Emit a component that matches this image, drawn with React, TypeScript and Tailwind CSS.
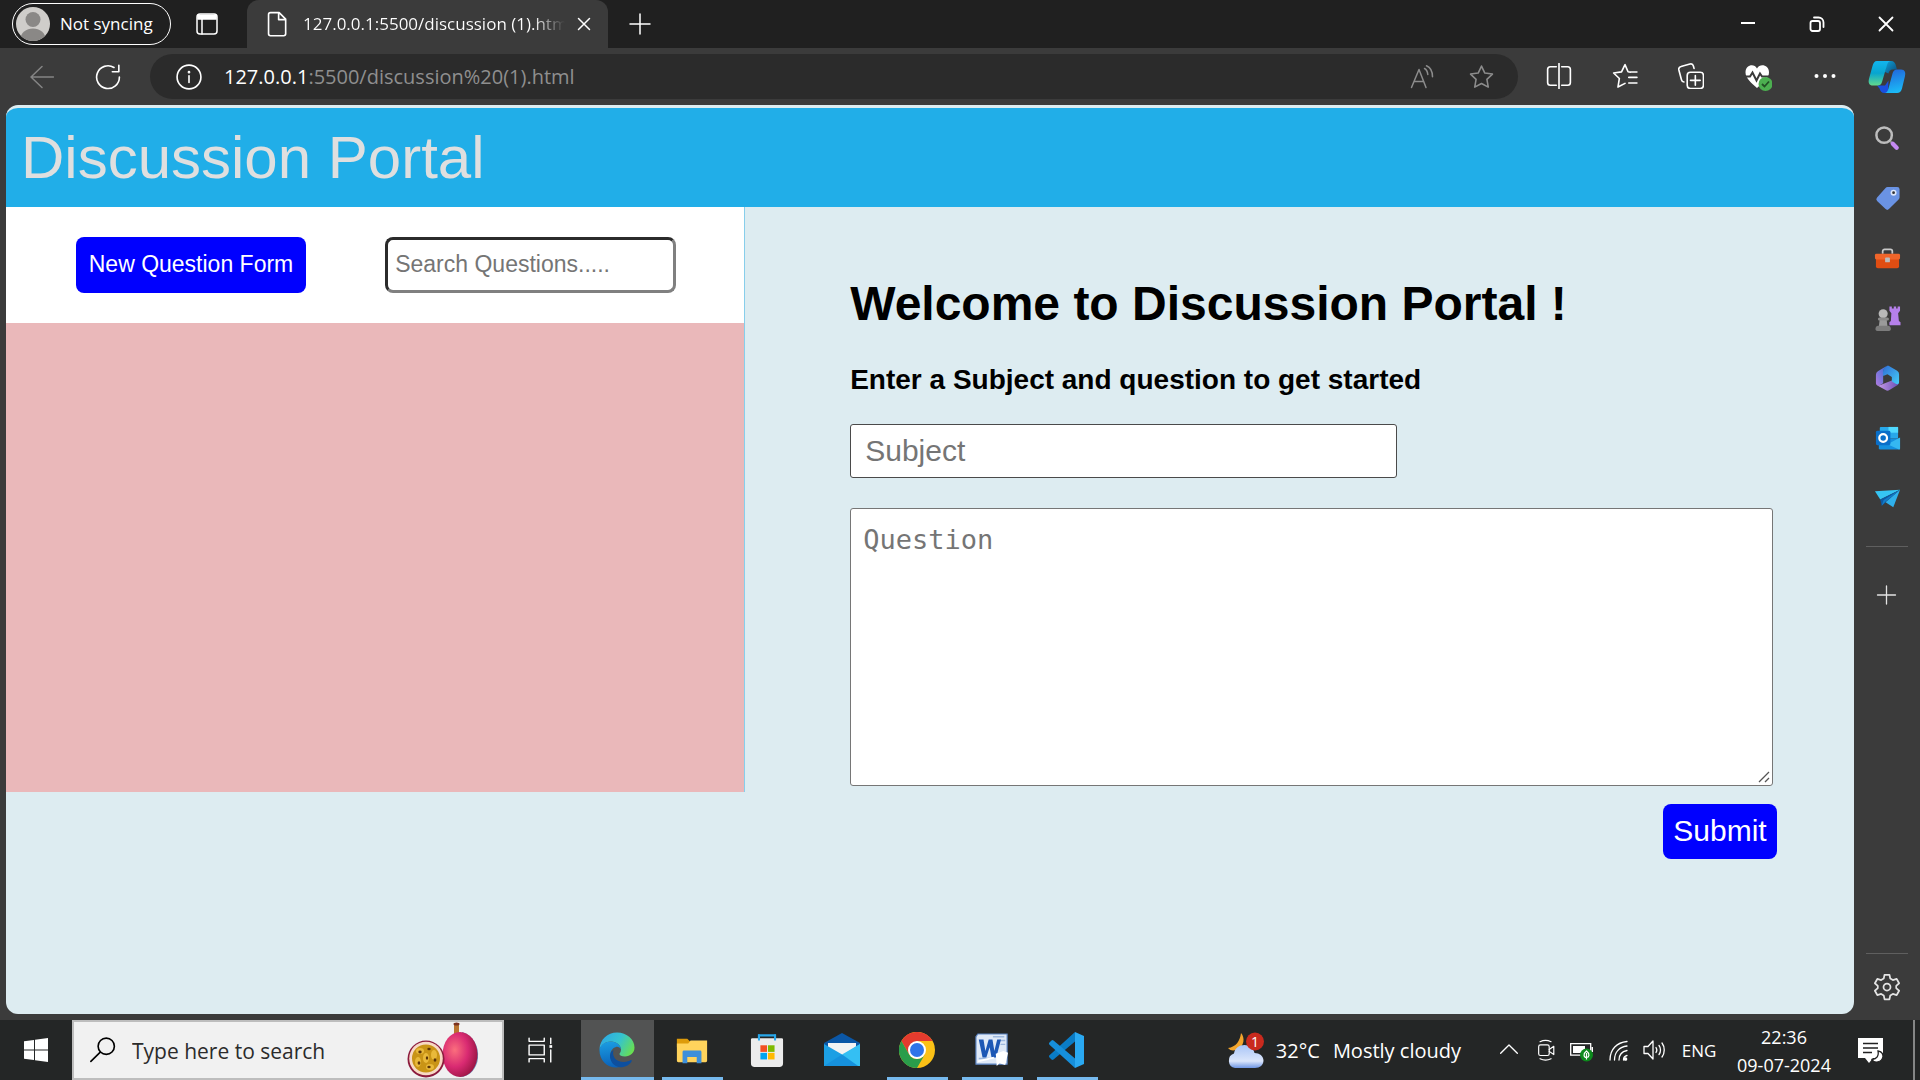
import React from "react";

type IconProps = { children: React.ReactNode; label?: string; className?: string; box?: string; sw?: number };

/* Line icon base used across the browser chrome and the taskbar */
function Line({ children, className = "size-6", box = "0 0 24 24", sw = 1.5 }: IconProps) {
  return (
    <svg viewBox={box} className={className} fill="none" stroke="currentColor" strokeWidth={sw} strokeLinecap="round" strokeLinejoin="round" aria-hidden="true">
      {children}
    </svg>
  );
}

function Pic({ children, className = "size-7", box = "0 0 28 28" }: IconProps) {
  return (
    <svg viewBox={box} className={className} aria-hidden="true">
      {children}
    </svg>
  );
}

function IconButton({ label, className = "", children }: { label: string; className?: string; children: React.ReactNode }) {
  return (
    <button type="button" aria-label={label} className={`flex shrink-0 items-center justify-center ${className}`}>
      {children}
    </button>
  );
}

function TitleBar() {
  return (
    <div className="flex h-12 shrink-0 items-center bg-[#202020] text-white">
      <button type="button" className="ml-3 flex h-[42px] w-[159px] items-center rounded-full border border-white pl-[3px] text-[17px]">
        <svg viewBox="0 0 34 34" className="size-[34px] shrink-0" aria-hidden="true">
          <defs>
            <clipPath id="avatar"><circle cx="17" cy="17" r="17" /></clipPath>
          </defs>
          <g clipPath="url(#avatar)">
            <rect width="34" height="34" fill="#cfcdca" />
            <circle cx="17" cy="12.5" r="7.5" fill="#8a8886" />
            <ellipse cx="17" cy="32" rx="12.5" ry="10.5" fill="#8a8886" />
          </g>
        </svg>
        <span className="ml-[10px] whitespace-nowrap">Not syncing</span>
      </button>
      <IconButton label="Tab actions" className="mx-[24px] size-[24px]">
        <Line>
          <rect x="2" y="2" width="20" height="20" rx="3" />
          <path d="M3 3.2h18V7H3z" fill="currentColor" />
          <path d="M7 7v15" />
        </Line>
      </IconButton>
      <div className="ml-1 flex h-12 w-[361px] items-center rounded-t-xl bg-[#3b3b3b]">
        <Line className="ml-[17px] size-[26px] shrink-0">
          <path d="M6 1.5h8l6 6V21a1.8 1.8 0 0 1-1.800 1.800H6A1.800 1.800 0 0 1 4.200 21V3.300A1.800 1.800 0 0 1 6 1.500zM13.500 1.500V8H20" />
        </Line>
        <span className="ml-[13px] w-[262px] overflow-hidden whitespace-nowrap bg-linear-to-r from-white from-88% to-[#3b3b3b] bg-clip-text text-[17px] text-transparent">127.0.0.1:5500/discussion (1).html</span>
        <IconButton label="Close tab" className="ml-[7px] size-6">
          <Line className="size-[24px]"><path d="M6.500 6.500l11 11M17.500 6.500l-11 11" /></Line>
        </IconButton>
      </div>
      <IconButton label="New tab" className="ml-[20px] size-6">
        <Line><path d="M12 2v20M2 12h20" /></Line>
      </IconButton>
      <div className="ml-auto flex">
        <IconButton label="Minimize" className="h-12 w-[69px]"><Line sw={2}><path d="M5 11h14" strokeLinecap="butt" /></Line></IconButton>
        <IconButton label="Restore" className="h-12 w-[69px]">
          <Line sw={1.800}><rect x="5.500" y="9" width="9.500" height="10" rx="2" /><path d="M9 5.500h4.500a5 5 0 0 1 5 5V15" /></Line>
        </IconButton>
        <IconButton label="Close" className="h-12 w-[69px]"><Line sw={1.800}><path d="M5.500 5.500l13 13M18.500 5.500l-13 13" /></Line></IconButton>
      </div>
    </div>
  );
}

const STAR = "M12 1.500l3.200 6.700 7.300 1-5.300 5.100 1.300 7.400L12 18.200l-6.500 3.500 1.300-7.400L1.500 9.200l7.300-1z";

function Copilot() {
  return (
    <Pic className="h-[34px] w-[38px]" box="0 0 38 34">
      <defs>
        <linearGradient id="cpA" x1="0" y1="0" x2="0" y2="1"><stop offset="0" stopColor="#12b5ee" /><stop offset=".5" stopColor="#08a5cf" /><stop offset="1" stopColor="#62d98c" /></linearGradient>
        <linearGradient id="cpB" x1=".4" y1="0" x2=".6" y2="1"><stop offset="0" stopColor="#2168dc" /><stop offset="1" stopColor="#1bbdf8" /></linearGradient>
        <linearGradient id="cpC" x1="0" y1="0" x2="1" y2="1"><stop offset="0" stopColor="#0ea2d8" /><stop offset="1" stopColor="#0b4a7c" /></linearGradient>
      </defs>
      <path d="M18 1h5c3 0 4.500 2 5 5l1 3.500h-4c-3 0-4 2-4.500 4L17 12z" fill="url(#cpC)" />
      <path d="M9 25.500h8l3.500-5L20 33h-3.500c-3 0-4.200-2-5-4.500z" fill="#1a4fe0" />
      <path d="M9 1h14c-2 0-3.300 1.500-4 4l-5 17c-.8 2.600-2.300 3.500-4.500 3.500H5c-4 0-5-3-4-6.800L4.500 6C5.300 3 6.500 1 9 1z" fill="url(#cpA)" />
      <path d="M29 9.500h4c4 0 4.800 3 4 6.500L34 28.500c-.8 3-2.500 4.500-5 4.500H16.500c2 0 3-1.500 3.800-4l4.200-15.500c.8-2.800 2.200-4 4.500-4z" fill="url(#cpB)" />
    </Pic>
  );
}

function Toolbar() {
  return (
    <div className="flex h-[57px] shrink-0 items-center bg-[#3b3b3b] text-white">
      <IconButton label="Back" className="ml-[30px] size-6 text-[#858585]"><Line className="size-6"><path d="M23.500 12H1M12 1.500L1 12l11 10.500" /></Line></IconButton>
      <IconButton label="Refresh" className="ml-[41px] size-[26px]">
        <Line className="size-[26px]"><path d="M22.500 12A10.500 10.500 0 1 1 17.500 3.200M22 1.200v6h-6" /></Line>
      </IconButton>
      <div className="ml-[29px] flex h-[45px] flex-1 items-center rounded-full bg-[#2b2b2b] pl-[26px]">
        <IconButton label="View site information" className="size-[26px]">
          <Line className="size-[26px]"><circle cx="12" cy="12" r="11" /><path d="M12 10.800v6.200" /><circle cx="12" cy="7.500" r=".5" fill="currentColor" /></Line>
        </IconButton>
        <span className="ml-[22px] text-[20px] text-[#8f8f8f]"><span className="text-white">127.0.0.1</span>:5500/discussion%20(1).html</span>
        <IconButton label="Read aloud" className="ml-auto size-6 text-[#8c8c8c]">
          <Line className="size-6"><path d="M1.500 22.500L9 4.500l7 18M4.300 16.500h9.500M14.500 3.500c2 1 3 3 3.300 6M16.500 .8c4 1.700 6 5.500 6 11" /></Line>
        </IconButton>
        <IconButton label="Add to favorites" className="mr-[24px] ml-[35px] size-[25px] text-[#8c8c8c]"><Line className="size-[26px]"><path d={STAR} /></Line></IconButton>
      </div>
      <div className="ml-[28px] flex gap-[40px]">
        <IconButton label="Split screen" className="size-[26px]">
          <Line className="size-[26px]"><path d="M9.500 3.500H4A2.500 2.500 0 0 0 1.500 6v12A2.500 2.500 0 0 0 4 20.500h5.500M14.500 3.500H20A2.500 2.500 0 0 1 22.500 6v12a2.500 2.500 0 0 1-2.500 2.500h-5.500M12 .5v23" /></Line>
        </IconButton>
        <IconButton label="Favorites" className="size-[26px]">
          <Line className="size-[26px]"><path d="M17 8.500l-2.200-.4L12 1.500 8.800 8.200l-7.300 1 5.300 5.100-1.300 7.900 6.500-3.400M15.500 8.300h7.500M15.500 13.300H23M15.500 18.500H23" /></Line>
        </IconButton>
        <IconButton label="Collections" className="size-[26px]">
          <Line className="size-[26px]"><rect x="8.500" y="8.500" width="15" height="15" rx="3" /><path d="M16 11.500v9M11.500 16h9M5.500 17.500c-1.300 0-2-.8-2.300-2L.8 6.500C.4 4.800 1.200 3.700 2.800 3.300L11 .9c1.600-.4 2.800.3 3.200 1.800l.6 2.300" /></Line>
        </IconButton>
        <IconButton label="Browser essentials" className="size-[28px]">
          <Pic className="size-[28px]">
            <path d="M13 25C8 20.500 1.500 15.500 1.500 9.500 1.500 2 10 0 13 5.500 16 0 25 2 25 9.500c0 6-7 11-12 15.500z" fill="#fff" />
            <path d="M-1 13.500h7l2.500-4 4 8 3.500-7 2 3H28" fill="none" stroke="#3b3b3b" strokeWidth="2" />
            <circle cx="21.500" cy="21" r="7" fill="#4caf50" /><path d="M18 21l2.500 2.500 4.500-5" fill="none" stroke="#224f25" strokeWidth="1.800" />
          </Pic>
        </IconButton>
        <IconButton label="Settings and more" className="size-[26px]">
          <Pic className="size-[24px]" box="0 0 24 24"><g fill="#fff"><circle cx="3.500" cy="12" r="2" /><circle cx="12" cy="12" r="2" /><circle cx="20.500" cy="12" r="2" /></g></Pic>
        </IconButton>
      </div>
      <IconButton label="Copilot" className="mr-[14px] ml-[30px] w-[38px]"><Copilot /></IconButton>
    </div>
  );
}

const sideApps = [
  {
    name: "Search",
    icon: <><path d="M16.500 16.500l3 3" stroke="#888" strokeWidth="2.500" /><circle cx="10.500" cy="10.500" r="8" fill="none" stroke="#bdbdbd" strokeWidth="2.600" /><path d="M19.500 19.500l4 4" stroke="#c58af2" strokeWidth="4.500" strokeLinecap="round" /></>,
  },
  {
    name: "Shopping",
    icon: <><path d="M14 2h10a2.500 2.500 0 0 1 2.500 2.500V13a3 3 0 0 1-1 2L15.500 25a2.500 2.500 0 0 1-3.500 0l-8.800-8.500a2.500 2.500 0 0 1 0-3.500L12 3a3 3 0 0 1 2-1z" fill="#6a93e4" /><circle cx="20.300" cy="8" r="2.300" fill="#333" stroke="#dce6fb" strokeWidth="1.700" /></>,
  },
  {
    name: "Tools",
    icon: <><path d="M9 9V6.500A2 2 0 0 1 11 4.500h6a2 2 0 0 1 2 2V9" fill="none" stroke="#c9c9c9" strokeWidth="1.800" /><rect x="2" y="13" width="24" height="11" rx="2" fill="#e04d12" /><rect x="1" y="9" width="26" height="6" rx="1.500" fill="#f0652a" /><rect x="11.500" y="13" width="5" height="5" rx="1" fill="#bcbcbc" /></>,
  },
  {
    name: "Games",
    icon: <><path d="M16 1.500h2.500v2h2v-2h2.500v2h1.500v-2H27V6l-2 2.500.8 8L27.500 18v3H16v-3l1.500-1.500.5-8L16 6z" fill="#b580ea" /><path d="M6 14h7l1 8H5z" fill="#9a9a9a" /><circle cx="9.500" cy="9" r="4.700" fill="#b9b9b9" /><rect x="4" y="13" width="11.500" height="3.200" rx="1.600" fill="#8b8b8b" /><path d="M1.500 25c0-3 2-3.500 4-3.500h8c2 0 4 .5 4 3.500 0 1-.5 2-2 2h-12c-1.500 0-2-1-2-2z" fill="#7c7c7c" /></>,
  },
  {
    name: "Microsoft 365",
    icon: <>
      <defs>
        <linearGradient id="mA" x1="0" y1="1" x2="1" y2="0"><stop offset="0" stopColor="#b07be0" /><stop offset="1" stopColor="#3a6fd8" /></linearGradient>
        <linearGradient id="mB" x1="0" y1="0" x2="1" y2="1"><stop offset="0" stopColor="#2f6fd6" /><stop offset="1" stopColor="#46cdf7" /></linearGradient>
        <linearGradient id="mC" x1="0" y1="0" x2="1" y2="0"><stop offset="0" stopColor="#c79be8" /><stop offset="1" stopColor="#6a4fb5" /></linearGradient>
      </defs>
      <path d="M13 1L4 6.500A4 4 0 0 0 2 10v9a2.500 2.500 0 0 0 4 2l3.500-2V11c0-4 0-7.500 3.500-10z" fill="url(#mA)" />
      <path d="M6 21l12.500-5 7 2.500-.5 2-9 5.500a4 4 0 0 1-4 0L4 21.500z" fill="url(#mC)" />
      <path d="M13 1.200c1-.5 2-.4 3 .1L24 6a4 4 0 0 1 2 3.500V18c0 2-2 2.500-3.500 1.500L18.500 17v-4.500l-4.500-3-4.500 2C9 6 9.500 3 13 1.200z" fill="url(#mB)" />
    </>,
  },
  {
    name: "Outlook",
    icon: <><rect x="6" y="2" width="19" height="12" rx="1" fill="#28a8ea" /><rect x="15" y="2" width="10" height="6" fill="#50d9ff" /><path d="M5 14h22v10a1.500 1.500 0 0 1-1.500 1.500H6.500A1.500 1.500 0 0 1 5 24z" fill="#1490df" /><path d="M27 13L14 20l12 5.500c1-.3 1-1 1-1.500z" fill="#35b8f1" /><rect x="2" y="6" width="15" height="15" rx="1.500" fill="#0a6fc9" /><circle cx="9.500" cy="13.500" r="4" fill="none" stroke="#fff" strokeWidth="2.300" /></>,
  },
  {
    name: "Drop",
    icon: <><path d="M1 6.500L27 5 6.500 15z" fill="#36c5f4" /><path d="M6.500 15L27 5 8 21.500z" fill="#0c59a4" /><path d="M27 5L20 23l-8-5z" fill="#2fb0ec" /><path d="M8 21.500l4-4.500 15-12-17 10.500z" fill="#127cc9" /></>,
  },
];

function Sidebar() {
  return (
    <nav aria-label="Sidebar" className="flex w-[66px] shrink-0 flex-col items-center bg-[#3b3b3b] pt-[3px] text-[#e4e4e4]">
      {sideApps.map((a) => (
        <IconButton key={a.name} label={a.name} className="h-[60px] w-full"><Pic className="size-[27px]">{a.icon}</Pic></IconButton>
      ))}
      <div className="mt-[18px] h-px w-[42px] bg-[#5f5f5f]" />
      <IconButton label="Customize" className="mt-[18px] h-[60px] w-full"><Line className="size-6" sw={1.300}><path d="M11.500 3v18M2.500 12h18" /></Line></IconButton>
      <div className="mt-auto h-px w-[42px] bg-[#5f5f5f]" />
      <IconButton label="Settings" className="h-[66px] w-full">
        <Line className="size-[28px]">
          <circle cx="12" cy="12" r="3" />
          <path d="M9.900 1.500h4.200l.7 3.300 2.200 1.300 3.300-1 2.100 3.700L19.900 11v2l2.500 2.200-2.100 3.700-3.300-1-2.200 1.300-.7 3.300H9.900l-.7-3.300L7 17.900l-3.300 1-2.100-3.700L4.100 13v-2L1.600 8.800l2.100-3.700 3.300 1 2.200-1.300z" />
        </Line>
      </IconButton>
    </nav>
  );
}

function Portal() {
  return (
    <main className="mb-[6px] ml-[6px] flex min-w-0 flex-1 flex-col overflow-hidden rounded-xl border-t-3 border-[#ddecf1] bg-[#ddecf1] font-['Liberation_Sans',Arial,sans-serif]">
      <header className="flex h-[99px] shrink-0 items-center bg-[#21aee8] px-[15px] text-[60px] leading-[72px] text-[#dfdfdf]">Discussion Portal</header>
      <div className="flex flex-1 items-start">
        <section className="w-2/5 border-r border-[#87ceeb]">
          <div className="flex h-[116px] items-center justify-between bg-white pr-[68px] pl-[70px] text-[23px]">
            <button type="button" className="h-14 w-[230px] rounded-lg bg-[#0000ff] pb-[2px] whitespace-nowrap text-white">New Question Form</button>
            <input type="search" aria-label="Search Questions" placeholder="Search Questions....." className="h-14 w-[291px] rounded-lg border-3 border-t-[#2b2b2b] border-r-[#808080] border-b-[#808080] border-l-[#2b2b2b] bg-white px-[7px] pb-[2px] placeholder:text-[#757575]" />
          </div>
          <div className="h-[469px] bg-[#eab8ba]" />
        </section>
        <form className="flex flex-1 flex-col pt-[69px] pr-[77px] pl-[105px]" onSubmit={(e) => e.preventDefault()}>
          <h1 className="text-[48px] leading-[56px] font-bold text-black">Welcome to Discussion Portal !</h1>
          <h2 className="mt-8 text-[28px] leading-[32px] font-bold text-black">Enter a Subject and question to get started</h2>
          <input type="text" aria-label="Subject" placeholder="Subject" className="mt-7 h-[54px] w-[59%] rounded-[3px] border border-[#4a4a4a] bg-white px-[14px] text-[30px] placeholder:text-[#757575]" />
          <div className="relative mt-[30px] mr-1 flex">
            <textarea aria-label="Question" placeholder="Question" className="h-[278px] w-full resize-none rounded-[3px] border border-[#767676] bg-white px-3 py-[14px] font-['DejaVu_Sans_Mono',monospace] text-[27px] leading-[34px] placeholder:text-[#757575]" />
            <svg viewBox="0 0 12 12" className="pointer-events-none absolute right-[3px] bottom-[3px] size-3" fill="none" stroke="#555" strokeWidth="1.300" aria-hidden="true">
              <path d="M1 11L11 1M7 11l4-4" />
            </svg>
          </div>
          <button type="submit" className="mt-[18px] h-[55px] w-[114px] self-end rounded-lg bg-[#0000ff] pb-[2px] text-[30px] text-white">Submit</button>
        </form>
      </div>
    </main>
  );
}

function Fruit() {
  return (
    <Pic className="h-[56px] w-[74px]" box="0 0 74 56">
      <defs>
        <radialGradient id="fr" cx=".35" cy=".4" r=".75"><stop offset="0" stopColor="#fb6f7d" /><stop offset=".5" stopColor="#d92a72" /><stop offset="1" stopColor="#8d1039" /></radialGradient>
      </defs>
      <rect x="47" y="1" width="5" height="12" fill="#b9742f" /><ellipse cx="49.500" cy="2" rx="3" ry="1.500" fill="#7c3320" />
      <path d="M55 10c11 3 17 14 16 26-1 11-9 19-18 19z" fill="#6a8db8" />
      <ellipse cx="53" cy="32.500" rx="17.500" ry="22.500" fill="url(#fr)" />
      <circle cx="19" cy="37" r="18.500" fill="#8c1b3d" /><circle cx="19" cy="36.500" r="16.800" fill="#f7d9c4" /><circle cx="19" cy="36.500" r="14" fill="#c99416" />
      <g fill="#e9b93a"><ellipse cx="13" cy="29" rx="4" ry="3" /><ellipse cx="19" cy="36" rx="3" ry="5" /><ellipse cx="27" cy="33" rx="3" ry="5" /><ellipse cx="11" cy="40" rx="3" ry="5" /><ellipse cx="23" cy="45" rx="4" ry="3" /></g>
      <g fill="#5b3408"><ellipse cx="13" cy="30" rx="1.700" ry="1.400" /><ellipse cx="22" cy="27" rx="1.700" ry="1.200" /><ellipse cx="20" cy="36" rx="1.200" ry="1.700" /><ellipse cx="28" cy="38" rx="1.400" ry="1.700" /><ellipse cx="12" cy="41" rx="1.400" ry="1.700" /><ellipse cx="22" cy="45" rx="1.700" ry="1.300" /></g>
    </Pic>
  );
}

const apps = [
  {
    name: "Microsoft Edge", active: true, open: true,
    icon: <>
      <defs>
        <linearGradient id="edA" x1="0" y1=".3" x2="1" y2=".7"><stop offset="0" stopColor="#2da9e4" /><stop offset=".5" stopColor="#35c3cf" /><stop offset="1" stopColor="#6be04c" /></linearGradient>
        <linearGradient id="edB" x1=".3" y1="0" x2=".4" y2="1"><stop offset="0" stopColor="#1b9de2" /><stop offset="1" stopColor="#0b62b9" /></linearGradient>
      </defs>
      <path d="M.5 17C1 7.500 8.500.5 18 .5c10 0 17.500 7 17.500 15 0 5.500-4.500 9-9.500 9-3.500 0-5.500-1-5.500-2.500 0-1 1.500-1.700 1.500-4.500 0-4-4.500-8-10-8C6.500 9.500 2.500 13 .5 17z" fill="url(#edA)" />
      <path d="M.5 17C2 12.500 6.500 9.500 12 9.500c5.500 0 10 4 10 8-1-2-3-3-5-2.500-4 1-6 5-5.500 9.500.5 5 4 9.500 10 10.500C9.500 37.500 0 29 .5 17z" fill="url(#edB)" />
      <path d="M14.500 18c-2 7 3 12 10 12 3.500 0 6-1.500 7-1.800 1-.4 1.500.4 1 1.300C30.500 33 26 35.500 21 35.300c-6-.8-9.500-5.300-10-10.300-.2-3 1-5.800 3.500-7z" fill="#0d4f9e" />
    </>,
  },
  {
    name: "File Explorer", open: true,
    icon: <><path d="M2 6h11l3 3v6H2z" fill="#dd9b0b" /><path d="M2 11h12l2.500-3H34v21.500a1.500 1.500 0 0 1-1.500 1.500H3.500A1.500 1.500 0 0 1 2 29.500z" fill="#ffd35c" /><path d="M8 20a1.500 1.500 0 0 1 1.500-1.500h17A1.500 1.500 0 0 1 28 20v12h-5v-6.500H13V32H8z" fill="#3d8fda" /></>,
  },
  {
    name: "Microsoft Store", open: false,
    icon: <><path d="M9.500 8V2.500h17V8" fill="none" stroke="#29a8ea" strokeWidth="2.200" /><path d="M1 7a1.500 1.500 0 0 1 1.500-1.500h31A1.500 1.500 0 0 1 35 7v25a4 4 0 0 1-4 4H5a4 4 0 0 1-4-4z" fill="#ececec" /><path d="M9.500 1.500v6.500M26.500 1.500V8" stroke="#29a8ea" strokeWidth="2.200" /><path d="M11 13h7v7h-7z" fill="#f25022" /><path d="M19 13h7v7h-7z" fill="#7fba00" /><path d="M11 21h7v7h-7z" fill="#00a4ef" /><path d="M19 21h7v7h-7z" fill="#ffb900" /></>,
  },
  {
    name: "Mail", open: false,
    icon: <><path d="M0 11L18 1l18 10v4H0z" fill="#0b57a6" /><path d="M4 11h28v12H4z" fill="#f3f3f3" /><path d="M0 12l19 11L36 12v22H0z" fill="#1c9fe4" /><path d="M36 12L18 22.500 34 34h2z" fill="#34bff3" /><path d="M0 34l18-11.500L34 34z" fill="#1288d8" opacity=".6" /></>,
  },
  {
    name: "Google Chrome", open: true,
    icon: <><circle cx="18" cy="18" r="18" fill="#fbc116" /><path d="M18 9h15.600A18 18 0 0 0 2.400 9l7.800 13.500z" fill="#e33b2e" /><path d="M2.400 9A18 18 0 0 0 18 36l7.800-13.500A9 9 0 0 1 10.200 22.500z" fill="#2a9d4b" /><circle cx="18" cy="18" r="9" fill="#fff" /><circle cx="18" cy="18" r="7" fill="#2f74e8" /></>,
  },
  {
    name: "Microsoft Word", open: true,
    icon: <><path d="M3 1h31v32H1V4z" fill="#dfe9f7" stroke="#5a83c2" strokeWidth="1.200" /><path d="M19 4h12M26 8h6M27 12h5M4 27h12" stroke="#9db8de" strokeWidth="1.500" /><path d="M4 7h5l2 12 3.500-12h4l2 12 3-12h4l-5 19h-5l-2-11-3.500 11H8z" fill="#1c57b5" /><path d="M22 22l8-3 5 2-3 13-6-2-3 3z" fill="#fff" /><path d="M3 30l17-4" stroke="#fff" strokeWidth="2" /></>,
  },
  {
    name: "Visual Studio Code", open: true,
    icon: <><path d="M26 0l9 4v28l-9 4z" fill="#2aa9f2" /><path d="M26 9.500L4.500 27.500a1.500 1.500 0 0 1-2 0l-2-2a1.500 1.500 0 0 1 0-2.200L26 0z" fill="#0a7cc6" /><path d="M26 26.500L4.500 8.500a1.500 1.500 0 0 0-2 0l-2 2a1.500 1.500 0 0 0 0 2.200L26 36z" fill="#168fdb" /></>,
  },
];

function Taskbar() {
  return (
    <footer className="flex h-[60px] shrink-0 items-stretch bg-[#242626] text-white">
      <IconButton label="Start" className="w-[72px]">
        <Pic className="size-6" box="0 0 24 24"><path d="M0 3.300l10-1.400v9.600H0zM11 1.700L24 0v11.500H11zM0 12.500h10v9.600L0 20.700zM11 12.500h13V24l-13-1.700z" fill="#fff" /></Pic>
      </IconButton>
      <label className="flex w-[432px] items-center border-2 border-[#bdbdbd] bg-[#f1f1f1] pl-4">
        <Line className="size-[26px] shrink-0 text-black"><circle cx="15" cy="8.500" r="7.500" /><path d="M9.500 14L.8 22.500" /></Line>
        <input type="text" placeholder="Type here to search" aria-label="Type here to search" className="ml-4 w-[275px] bg-transparent pt-1 text-[21px] placeholder:text-[#2b2b2b]" />
        <Fruit />
      </label>
      <IconButton label="Task view" className="w-[77px] pr-1">
        <Line className="size-[26px]" sw={1.300}><path d="M1 1v3h14V1M1 23v-3h14v3M1 7.500h14v9H1zM21 1v5M21 12v11" /><path d="M19.800 7.500h2.500v2.500h-2.500z" fill="currentColor" stroke="none" /></Line>
      </IconButton>
      {apps.map((a) => (
        <button key={a.name} type="button" aria-label={a.name} className={a.active ? "mr-2 flex w-[73px] flex-col items-center bg-[#525353]" : "mr-[14px] flex w-[61px] flex-col items-center"}>
          <span className="flex flex-1 items-center pt-[2px] pr-[2px]"><Pic className={a.active || a.name === "Google Chrome" || a.name === "Mail" || a.name.startsWith("Visual") ? "size-9" : "size-[34px]"} box="0 0 36 36">{a.icon}</Pic></span>
          <span className={a.open ? "h-[3px] w-full bg-[#76b9ed]" : "h-[3px] w-full"} />
        </button>
      ))}
      <div className="ml-auto flex items-center">
        <button type="button" className="flex items-center text-[20px] whitespace-nowrap">
          <svg viewBox="0 0 37 37" className="size-[37px]" aria-hidden="true">
            <defs><linearGradient id="cl" x1="0" y1="0" x2="0" y2="1"><stop offset="0" stopColor="#a9c5f7" /><stop offset=".7" stopColor="#dbe6fb" /><stop offset="1" stopColor="#6f96e4" /></linearGradient></defs>
            <path d="M14 1c4 4 4 14-5 17-3 1-6 .5-8-2 8-1 12-7 13-15z" fill="#f2a42c" />
            <path d="M8 36a7.500 7.500 0 0 1-1-14.500C8 16 12 13 17.500 13c5 0 9 3 10 8 5 0 9 3 9 7.500S33 36 28 36z" fill="url(#cl)" />
            <circle cx="28" cy="9.500" r="9" fill="#c92a1e" /><text x="28" y="14.500" textAnchor="middle" fontSize="14" fill="#fff">1</text>
          </svg>
          <span className="ml-3 pt-[2px]">32°C</span>
          <span className="ml-[13px] pt-[2px]">Mostly cloudy</span>
        </button>
        <IconButton label="Show hidden icons" className="ml-[38px] size-5"><Line className="size-5" sw={1.600}><path d="M2 16L12 6l10 10" /></Line></IconButton>
        <IconButton label="Meet now" className="ml-[16px] size-[22px]"><Line className="size-[24px]" sw={1.300}><rect x="4" y="6.500" width="11.500" height="11.500" rx="2" /><path d="M15.500 11.500L20.500 8v9l-5-3.500M5.500 3c4-2 8-2 12 0M5.500 21.500c4 2 8 2 12 0" /></Line></IconButton>
        <IconButton label="Battery" className="ml-[12px] w-[26px]">
          <Pic className="h-6 w-[26px]" box="0 0 26 24"><path d="M1.700 5.700h20v11.500h-20z" fill="none" stroke="#fff" strokeWidth="1.300" /><path d="M4 8h12v7H4z" fill="#fff" /><path d="M22.500 9h1.500v5h-1.500z" fill="#fff" /><circle cx="17.500" cy="17" r="6.500" fill="#0c8a1c" /><path d="M17.500 13c-4 3-2.500 6.500 0 6.500s4-3.500 0-6.500zm0 2v6.500" fill="none" stroke="#fff" strokeWidth="1.200" /></Pic>
        </IconButton>
        <IconButton label="Network" className="ml-[12px] size-6">
          <Line className="size-6" sw={1.300}><path d="M3 22C3 11 10 4.500 20 3.500M7.500 22c0-8 5-13 12.500-14M12 22c0-5 3-8.500 8-9.500M16.500 22c0-2.500 1.500-4 3.500-4.500" /><circle cx="18.500" cy="21" r="1.200" fill="currentColor" /></Line>
        </IconButton>
        <IconButton label="Volume" className="ml-[11px] size-6"><Line className="size-[26px]" sw={1.300}><path d="M2 8.500h4L11 3v18l-5-5.500H2zM14 9.500c1 1.500 1 3.500 0 5M17 7.500c2 2.500 2 6.500 0 9M20 5c3 4 3 10 0 14" /></Line></IconButton>
        <button type="button" className="ml-[15px] w-[36px] pt-[2px] text-[17px]">ENG</button>
        <time className="ml-[18px] flex w-[98px] flex-col items-center pt-[2px] text-[18px] leading-[28px] whitespace-nowrap"><span>22:36</span><span>09-07-2024</span></time>
        <IconButton label="Notifications" className="ml-[25px] size-[25px]">
          <Pic className="size-[25px]" box="0 0 25 25"><path d="M0 0h25v20H15l-4 5-4-5H0z" fill="#fff" /><path d="M5 5.500h15M5 10h15M5 14.500h9" stroke="#222" strokeWidth="1.300" /><path d="M20 13c1 5-1 8-6 8.500 2 4 10 3.500 11-3 0-2.500-1.500-5-5-5.500z" fill="#fff" stroke="#222" strokeWidth="1.300" /></Pic>
        </IconButton>
        <div className="mr-[5px] ml-[30px] h-[60px] w-[2px] bg-[#858686]" />
      </div>
    </footer>
  );
}

export default function App() {
  return (
    <div className="flex h-screen flex-col overflow-hidden bg-[#3b3b3b] font-['Open_Sans','Noto_Sans',sans-serif]">
      <TitleBar />
      <Toolbar />
      <div className="flex min-h-0 flex-1">
        <Portal />
        <Sidebar />
      </div>
      <Taskbar />
    </div>
  );
}
